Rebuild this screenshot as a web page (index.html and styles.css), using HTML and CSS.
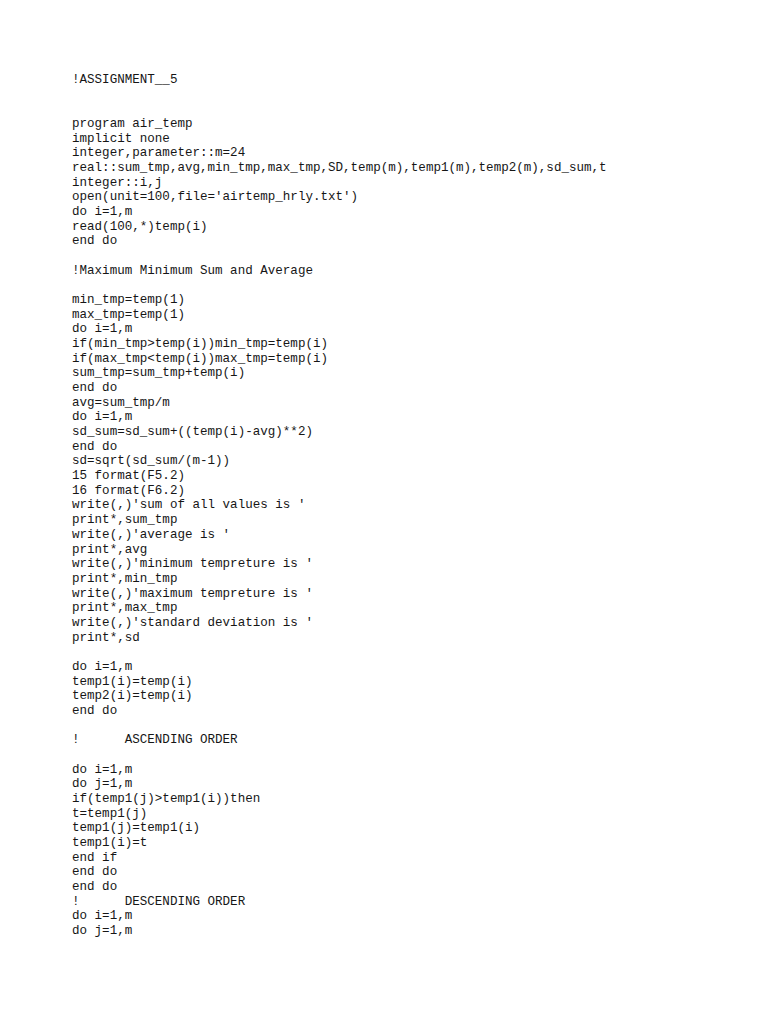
FILE: index.html
```html
<!DOCTYPE html>
<html>
<head>
<meta charset="utf-8">
<link rel="stylesheet" href="styles.css">
</head>
<body>
<main class="page">
<pre class="code">!ASSIGNMENT__5


program air_temp
implicit none
integer,parameter::m=24
real::sum_tmp,avg,min_tmp,max_tmp,SD,temp(m),temp1(m),temp2(m),sd_sum,t
integer::i,j
open(unit=100,file='airtemp_hrly.txt')
do i=1,m
read(100,*)temp(i)
end do

!Maximum Minimum Sum and Average

min_tmp=temp(1)
max_tmp=temp(1)
do i=1,m
if(min_tmp&gt;temp(i))min_tmp=temp(i)
if(max_tmp&lt;temp(i))max_tmp=temp(i)
sum_tmp=sum_tmp+temp(i)
end do
avg=sum_tmp/m
do i=1,m
sd_sum=sd_sum+((temp(i)-avg)**2)
end do
sd=sqrt(sd_sum/(m-1))
15 format(F5.2)
16 format(F6.2)
write(,)'sum of all values is '
print*,sum_tmp
write(,)'average is '
print*,avg
write(,)'minimum tempreture is '
print*,min_tmp
write(,)'maximum tempreture is '
print*,max_tmp
write(,)'standard deviation is '
print*,sd

do i=1,m
temp1(i)=temp(i)
temp2(i)=temp(i)
end do

!      ASCENDING ORDER

do i=1,m
do j=1,m
if(temp1(j)&gt;temp1(i))then
t=temp1(j)
temp1(j)=temp1(i)
temp1(i)=t
end if
end do
end do
!      DESCENDING ORDER
do i=1,m
do j=1,m</pre>
</main>
</body>
</html>
```

FILE: styles.css
```css
html, body {
  margin: 0;
  padding: 0;
  background: #ffffff;
}

.page {
  width: 768px;
  height: 1024px;
  box-sizing: border-box;
  padding: 73px 0 0 72px;
  overflow: hidden;
}

.code {
  margin: 0;
  font-family: "Liberation Mono", "DejaVu Sans Mono", monospace;
  font-size: 12.55px;
  line-height: 14.67px;
  color: #161616;
  white-space: pre;
}
```
